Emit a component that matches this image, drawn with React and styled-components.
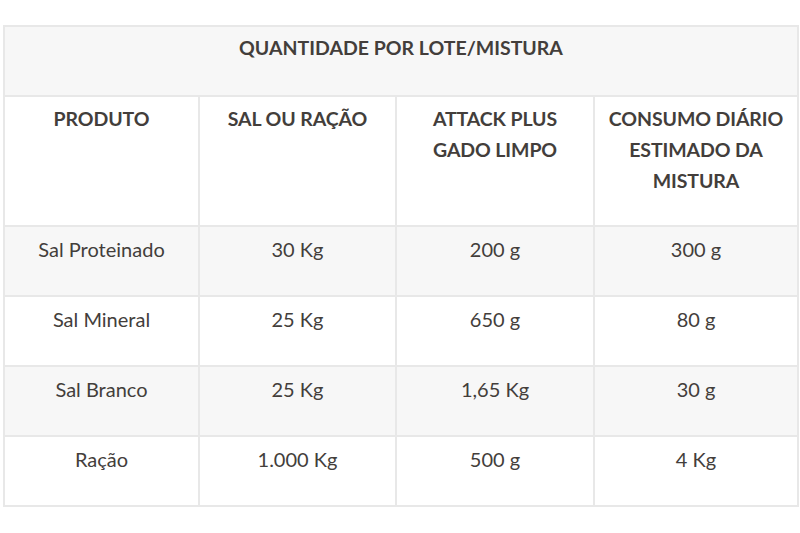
import React from "react";
import styled, { createGlobalStyle } from "styled-components";

const Global = createGlobalStyle`
  html, body { margin: 0; padding: 0; background: #fff; }
  body { font-family: Lato, "Open Sans", sans-serif; }
`;

const Page = styled.div`
  width: 800px;
  height: 533px;
  padding: 25px 3px 0 3px;
  box-sizing: border-box;
  background: #fff;
`;

const Table = styled.table`
  width: 794px;
  border-collapse: collapse;
  table-layout: fixed;
  color: #433e3b;
  text-align: center;
  border: 2px solid #e8e8e8;
`;

const Col = styled.col`
  width: ${(p) => p.$w}px;
`;

const TitleCell = styled.th`
  height: 70px;
  box-sizing: border-box;
  vertical-align: top;
  padding: 6px 6px 0;
  background: #f7f7f7;
  font-size: 19.5px;
  font-weight: 700;
  line-height: 30px;
  border: 2px solid #e8e8e8;
`;

const HeadCell = styled.th`
  height: 130px;
  box-sizing: border-box;
  vertical-align: top;
  padding: 6px 6px 0;
  font-size: 19.5px;
  font-weight: 700;
  line-height: 31px;
  letter-spacing: -0.1px;
  background: #fff;
  border: 2px solid #e8e8e8;
`;

const Row = styled.tr`
  background: ${(p) => (p.$shaded ? "#f7f7f7" : "#fff")};
`;

const Cell = styled.td`
  height: 70px;
  box-sizing: border-box;
  vertical-align: top;
  padding: 7px 6px 0;
  font-size: 20px;
  line-height: 30px;
  border: 2px solid #e8e8e8;
`;

const colWidths = [195, 197, 198, 204];

const headers = [
  "PRODUTO",
  "SAL OU RAÇÃO",
  "ATTACK PLUS GADO LIMPO",
  "CONSUMO DIÁRIO ESTIMADO DA MISTURA",
];

const rows = [
  ["Sal Proteinado", "30 Kg", "200 g", "300 g"],
  ["Sal Mineral", "25 Kg", "650 g", "80 g"],
  ["Sal Branco", "25 Kg", "1,65 Kg", "30 g"],
  ["Ração", "1.000 Kg", "500 g", "4 Kg"],
];

export default function App() {
  return (
    <>
      <Global />
      <Page>
        <Table>
          <colgroup>
            {colWidths.map((w, i) => (
              <Col key={i} $w={w} />
            ))}
          </colgroup>
          <thead>
            <tr>
              <TitleCell colSpan={4}>QUANTIDADE POR LOTE/MISTURA</TitleCell>
            </tr>
            <tr>
              {headers.map((h) => (
                <HeadCell key={h}>{h}</HeadCell>
              ))}
            </tr>
          </thead>
          <tbody>
            {rows.map((r, i) => (
              <Row key={r[0]} $shaded={i % 2 === 0}>
                {r.map((c, j) => (
                  <Cell key={j}>{c}</Cell>
                ))}
              </Row>
            ))}
          </tbody>
        </Table>
      </Page>
    </>
  );
}
